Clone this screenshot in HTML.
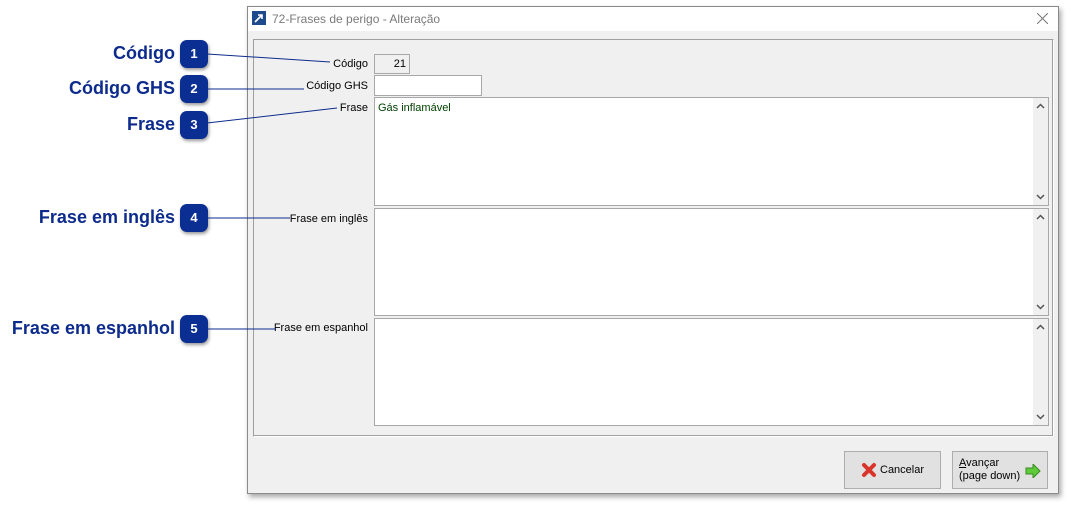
<!DOCTYPE html>
<html><head><meta charset="utf-8"><style>
*{box-sizing:border-box;margin:0;padding:0}
body{width:1072px;height:505px;background:#fff;position:relative;overflow:hidden;font-family:"Liberation Sans","DejaVu Sans",sans-serif;}
.a{position:absolute}
.win{left:247px;top:6px;width:812px;height:488px;background:#f0f0f0;border:1px solid #8a8a8a;box-shadow:2px 3px 5px rgba(0,0,0,.35)}
.title{left:0;top:0;width:810px;height:24px;background:#fff}
.panel{left:5px;top:32px;width:801px;height:398px;border:1px solid #a0a0a0;border-right-color:#fff;border-bottom-color:#fff;box-shadow:inset -1px -1px 0 #a0a0a0}
.lbl{font-size:11px;color:#000;text-align:right}
.box{background:#fff;border:1px solid #a8a8a8}
.sb{position:absolute;right:0;top:0;width:15px;height:100%;background:#f0f0f0;color:#555;font-size:10px}
.sb svg{position:absolute;left:3px}
.big{font-weight:bold;color:#0c2b8c;font-size:18px;text-align:right;width:175px;left:0}
.num{width:28px;height:28px;border-radius:7px;background:#0b2e93;color:#fff;font-weight:bold;font-size:13px;text-align:center;line-height:28px;box-shadow:1px 2px 3px rgba(0,0,0,.4)}
.btn{background:#e1e1e1;border:1px solid #adadad;font-size:11px}
</style></head><body>
<div class="a big" style="top:43px">Código</div>
<div class="a big" style="top:78px">Código GHS</div>
<div class="a big" style="top:114px">Frase</div>
<div class="a big" style="top:207px">Frase em inglês</div>
<div class="a big" style="top:318px">Frase em espanhol</div>
<div class="a num" style="left:180px;top:40px">1</div>
<div class="a num" style="left:180px;top:75px">2</div>
<div class="a num" style="left:180px;top:111px">3</div>
<div class="a num" style="left:180px;top:204px">4</div>
<div class="a num" style="left:180px;top:315px">5</div>

<div class="a win">
 <div class="a title">
  <svg class="a" style="left:4px;top:4px" width="14" height="14"><rect width="14" height="14" fill="#1e4a8c"/><path d="M3 11 L10 4 M6 4 H10 V8" stroke="#fff" stroke-width="1.6" fill="none"/></svg>
  <div class="a" style="left:24px;top:5px;font-size:12px;color:#7a7a7a">72-Frases de perigo - Alteração</div>
  <svg class="a" style="left:789px;top:6px" width="11" height="11"><path d="M0 0 L11 11 M11 0 L0 11" stroke="#777" stroke-width="1"/></svg>
 </div>
 <div class="a panel"></div>
 <div class="a lbl" style="left:40px;width:80px;top:51px">Código</div>
 <div class="a box" style="left:126px;top:47px;width:36px;height:20px;background:#f0f0f0;font-size:11px;text-align:right;padding:3px 3px 0 0">21</div>
 <div class="a lbl" style="left:20px;width:100px;top:73px">Código GHS</div>
 <div class="a box" style="left:126px;top:68px;width:108px;height:21px"></div>
 <div class="a lbl" style="left:40px;width:80px;top:95px">Frase</div>
 <div class="a box" style="left:126px;top:90px;width:675px;height:109px"><div style="font-size:11px;color:#004000;padding:4px 3px">Gás inflamável</div><div class="sb"><svg style="top:5px" width="9" height="6"><path d="M1 5 L4.5 1.5 L8 5" stroke="#555" stroke-width="1.5" fill="none"/></svg><svg style="bottom:5px" width="9" height="6"><path d="M1 1 L4.5 4.5 L8 1" stroke="#555" stroke-width="1.5" fill="none"/></svg></div></div>
 <div class="a lbl" style="left:0;width:120px;top:206px">Frase em inglês</div>
 <div class="a box" style="left:126px;top:201px;width:675px;height:108px"><div class="sb"><svg style="top:5px" width="9" height="6"><path d="M1 5 L4.5 1.5 L8 5" stroke="#555" stroke-width="1.5" fill="none"/></svg><svg style="bottom:5px" width="9" height="6"><path d="M1 1 L4.5 4.5 L8 1" stroke="#555" stroke-width="1.5" fill="none"/></svg></div></div>
 <div class="a lbl" style="left:0;width:120px;top:315px">Frase em espanhol</div>
 <div class="a box" style="left:126px;top:311px;width:675px;height:108px"><div class="sb"><svg style="top:5px" width="9" height="6"><path d="M1 5 L4.5 1.5 L8 5" stroke="#555" stroke-width="1.5" fill="none"/></svg><svg style="bottom:5px" width="9" height="6"><path d="M1 1 L4.5 4.5 L8 1" stroke="#555" stroke-width="1.5" fill="none"/></svg></div></div>
 <div class="a btn" style="left:596px;top:444px;width:97px;height:38px">
  <svg class="a" style="left:16px;top:10px" width="16" height="16"><path d="M3 3 L13 13 M13 3 L3 13" stroke="#d9342b" stroke-width="4" stroke-linecap="round"/></svg>
  <div class="a" style="left:35px;top:12px">Cancelar</div>
 </div>
 <div class="a btn" style="left:704px;top:444px;width:96px;height:38px">
  <div class="a" style="left:6px;top:5px;line-height:13px"><u>A</u>vançar<br>(page down)</div>
  <svg class="a" style="left:72px;top:12px" width="16" height="14"><path d="M1 4 H8 V0 L15 7 L8 14 V10 H1 Z" fill="#5ecb3a" stroke="#3a8a22" stroke-width="1"/></svg>
 </div>
</div>
<svg class="a" style="left:0;top:0;z-index:5" width="1072" height="505">
<g stroke="#0c2b8c" stroke-width="1" fill="none">
<line x1="207" y1="54" x2="330" y2="62"/>
<line x1="207" y1="89" x2="304" y2="89"/>
<line x1="207" y1="123" x2="337" y2="108"/>
<line x1="207" y1="218" x2="290" y2="218"/>
<line x1="207" y1="329" x2="276" y2="329"/>
</g></svg>
</body></html>
